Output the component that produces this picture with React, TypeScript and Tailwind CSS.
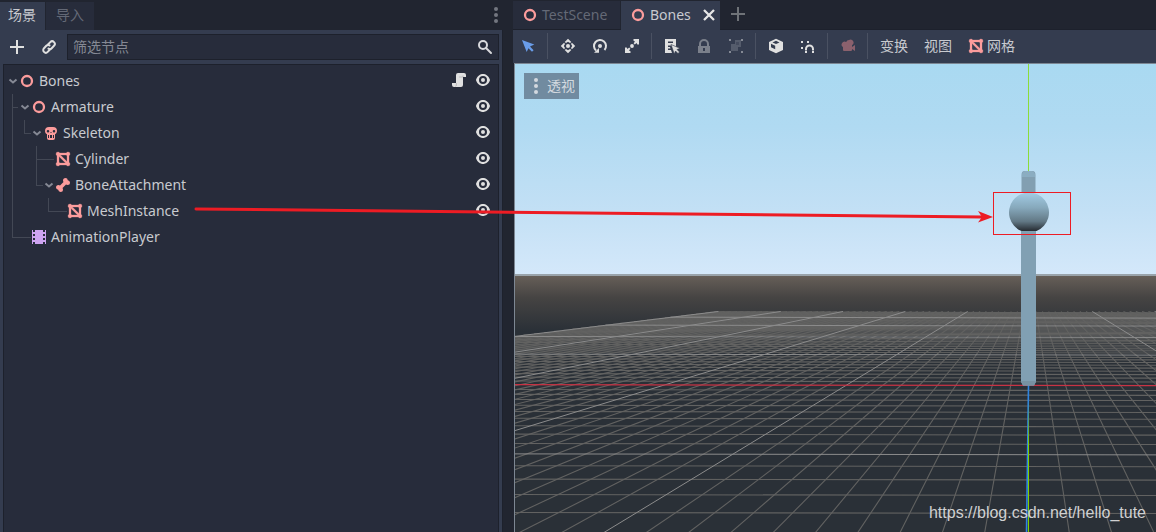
import React from "react";

const MESH =
  "M3 1a2 2 0 0 0-2 2 2 2 0 0 0 1 1.73v6.541A2 2 0 0 0 1 13a2 2 0 0 0 2 2 2 2 0 0 0 1.73-1h6.542A2 2 0 0 0 13 15a2 2 0 0 0 2-2 2 2 0 0 0-1-1.73V4.727A2 2 0 0 0 15 3a2 2 0 0 0-2-2 2 2 0 0 0-1.73 1H4.728A2 2 0 0 0 3 1zm2.414 3h5.857c.175.303.427.555.729.73v5.856zM4 5.414 10.586 12H4.729a2 2 0 0 0-.729-.73z";

type IconName =
  | "spatial" | "skeleton" | "mesh" | "bone" | "anim" | "eye" | "script" | "plus" | "link"
  | "search" | "dots" | "close" | "select" | "move" | "rotate" | "scale" | "list" | "lock"
  | "group" | "cube" | "snap" | "camera";

const shapes: Record<IconName, React.ReactNode> = {
  spatial: <circle cx="8" cy="8" r="5" fill="none" stroke="#fc9c9c" strokeWidth="2.300" />,
  skeleton: (
    <path
      fill="#fc9c9c"
      fillRule="evenodd"
      d="M6 2h4a4 4 0 0 1 4 4c0 1.600-.8 2.700-2 3.300V13a2 2 0 0 1-2 2H6a2 2 0 0 1-2-2V9.300C2.800 8.700 2 7.600 2 6a4 4 0 0 1 4-4zM5 5a1.300 1.300 0 1 0 0 2.600A1.300 1.300 0 0 0 5 5zm6 0a1.300 1.300 0 1 0 0 2.600A1.300 1.300 0 0 0 11 5zM7.500 7v1h1V7zM5 10v3h1v-2h1v2h2v-2h1v2h1v-3h-1v1H9v-1H7v1H6v-1z"
    />
  ),
  mesh: <path fill="#fc9c9c" stroke="#fc9c9c" strokeWidth="0.300" d={MESH} />,
  bone: (
    <path
      fill="#fc9c9c"
      d="M10.500 1A2.500 2.500 0 0 0 8 3.500c0 .6.200 1.100.5 1.500L5 8.500c-.4-.3-.9-.5-1.500-.5A2.500 2.500 0 0 0 1 10.500 2.500 2.500 0 0 0 3.200 12.800 2.500 2.500 0 0 0 5.500 15 2.500 2.500 0 0 0 8 12.500c0-.6-.2-1.100-.5-1.500L11 7.500c.4.300.9.500 1.500.5A2.500 2.500 0 0 0 15 5.500a2.500 2.500 0 0 0-2.200-2.300A2.500 2.500 0 0 0 10.500 1z"
    />
  ),
  anim: (
    <path
      fill="#cea4f1"
      fillRule="evenodd"
      d="M1 1v14h1v-2h2v2h8v-2h2v2h1V1h-1v2h-2V1H4v2H2V1zm1 4h2v2H2zm10 0h2v2h-2zM2 9h2v2H2zm10 0h2v2h-2z"
    />
  ),
  eye: (
    <path
      fill="#e0e0e0"
      fillRule="evenodd"
      d="M8 2C5.443 2 2.209 3.948 1.045 7.705a1 1 0 0 0-.006.570C2.163 12.022 5.393 14 8 14s5.838-1.978 6.963-5.725a1 1 0 0 0 0-.550C13.861 3.935 10.557 2 8 2zm0 2a4 4 0 0 1 0 8 4 4 0 0 1 0-8zm0 2a2 2 0 0 0 0 4 2 2 0 0 0 0-4z"
    />
  ),
  script: (
    <>
      <path fill="#e0e0e0" d="M7 1a2 2 0 0 0-2 2v8H1v2a2 2 0 0 0 2 2h7a2 2 0 0 0 2-2V5h3V3a2 2 0 0 0-2-2z" />
      <path fill="none" stroke="#b4b4b6" strokeWidth="0.800" d="M5.400 11v2a1.500 1.500 0 0 1-1 1.500M8 5h4V3.500" />
    </>
  ),
  plus: <path fill="currentColor" d="M7 1v6H1v2h6v6h2V9h6V7H9V1z" />,
  link: (
    <g fill="none" stroke="#e0e0e0" strokeWidth="2" strokeLinecap="round">
      <path d="M7 5.500 9.300 3.100a2.600 2.600 0 0 1 3.700 3.700L10.700 9.200a2.600 2.600 0 0 1-3.200.400" />
      <path d="M9 10.500 6.700 12.900a2.600 2.600 0 0 1-3.700-3.700L5.300 6.800a2.600 2.600 0 0 1 3.200-.4" />
    </g>
  ),
  search: (
    <g fill="none" stroke="#d8d9dc" strokeWidth="2">
      <circle cx="6" cy="6" r="4" />
      <path d="m9 9 5 5" strokeLinecap="round" />
    </g>
  ),
  dots: (
    <g fill="currentColor">
      <circle cx="8" cy="2" r="2" />
      <circle cx="8" cy="8" r="2" />
      <circle cx="8" cy="14" r="2" />
    </g>
  ),
  close: <path fill="none" stroke="#e6e6e6" strokeWidth="2.300" d="m3 3 10 10M13 3 3 13" />,
  select: <path fill="#699ce8" d="m2 2 12.300 4.600-4.300 2 3.600 3.600-1.600 1.600-3.600-3.600L6.700 14z" />,
  move: (
    <g fill="#e0e0e0">
      <circle cx="8" cy="8" r="2" />
      <path d="M8 .800 4.700 4.100 6 5l2-1.200L10 5l1.300-.9zM8 15.200l-3.300-3.300L6 11l2 1.200 2-1.200 1.300.9zM.800 8l3.300-3.300L5 6 3.800 8 5 10l-.9 1.300zM15.200 8l-3.300-3.300L11 6l1.200 2-1.200 2 .9 1.300z" />
    </g>
  ),
  rotate: (
    <>
      <path fill="none" stroke="#e0e0e0" strokeWidth="2" d="M4 12.500A6 6 0 1 1 12.500 12" />
      <circle cx="8" cy="8" r="2" fill="#e0e0e0" />
      <path fill="#e0e0e0" d="M2 14.800h5V10z" />
    </>
  ),
  scale: (
    <>
      <circle cx="8" cy="8" r="1.900" fill="#e0e0e0" />
      <path fill="#e0e0e0" d="M9.500 1H15v5.500h-1.700L12.600 5 10.800 6.400 9.600 5.200 11 3.400 9.500 2.700zM6.500 15H1V9.500h1.700l.7 1.500 1.800-1.400 1.200 1.200L5 12.600l1.500.7z" />
    </>
  ),
  list: (
    <>
      <path fill="#e0e0e0" fillRule="evenodd" d="M1 1v14h7l-1-3H4v-1.500h2.500L6 9H4V7.500h3L9 8l3 1V1zm3 2.500h5V5H4z" />
      <path fill="#e0e0e0" stroke="#343c4f" strokeWidth="0.600" d="m7 6.500 9 3.800-3 1.200 2.500 2.500-1.500 1.500-2.500-2.500-1.200 3z" />
    </>
  ),
  lock: (
    <path
      fill="#7b808b"
      fillRule="evenodd"
      d="M8 1a5 5 0 0 0-5 5v2H2v7h12V8h-1V6a5 5 0 0 0-5-5zm0 2a3 3 0 0 1 3 3v2H5V6a3 3 0 0 1 3-3zM7 10h2v3H7z"
    />
  ),
  group: (
    <>
      <path fill="#555c6c" d="M7 2h6v7h-3v4H3V6h4z" />
      <path fill="#454c5e" d="M8 4h3v3H8z" />
      <path fill="#858a95" d="M1 1h2v2H1zM13 1h2v2h-2zM1 13h2v2H1zM13 13h2v2h-2z" />
    </>
  ),
  cube: (
    <>
      <path fill="#e0e0e0" d="M8 .800 15 4v8l-7 3.300L1 12V4z" />
      <path fill="#343c4f" d="M8 2.800 11.500 4.400 8 6 4.500 4.400zM3 5.800l4.200 2v3.400L3 9.200z" />
    </>
  ),
  snap: (
    <>
      <path fill="#e0e0e0" d="M1 3h2v2H1zM7 3h2v2H7zM1 9h2v2H1z" />
      <path fill="none" stroke="#e0e0e0" strokeWidth="2" d="M6 15v-4a3.500 3.500 0 0 1 7 0v4" />
      <path stroke="#343c4f" strokeWidth="0.600" d="M4.500 12.500h3M11.500 12.500h3" />
    </>
  ),
  camera: (
    <path
      fill="#8b616d"
      d="M9 2a3 3 0 0 0-2.800 2A2.700 2.700 0 1 0 3 9v3a1 1 0 0 0 1 1h7a1 1 0 0 0 1-1v-1l3 2V7l-3 2V7.200A3 3 0 0 0 9 2z"
    />
  ),
};

function Icon({ name, className = "" }: { name: IconName; className?: string }) {
  return (
    <svg viewBox="0 0 16 16" aria-hidden="true" className={`size-4 shrink-0 ${className}`}>
      {shapes[name]}
    </svg>
  );
}

function IconButton({ name, label, className = "" }: { name: IconName; label: string; className?: string }) {
  return (
    <button aria-label={label} className={`flex h-6 w-6 shrink-0 items-center justify-center ${className}`}>
      <Icon name={name} />
    </button>
  );
}

type Node = { name: string; icon: IconName; indent: string; open?: boolean; script?: boolean; visible?: boolean };

const nodes: Node[] = [
  { name: "Bones", icon: "spatial", indent: "pl-1", open: true, script: true, visible: true },
  { name: "Armature", icon: "spatial", indent: "pl-4", open: true, visible: true },
  { name: "Skeleton", icon: "skeleton", indent: "pl-7", open: true, visible: true },
  { name: "Cylinder", icon: "mesh", indent: "pl-10", visible: true },
  { name: "BoneAttachment", icon: "bone", indent: "pl-10", open: true, visible: true },
  { name: "MeshInstance", icon: "mesh", indent: "pl-13", visible: true },
  { name: "AnimationPlayer", icon: "anim", indent: "pl-4" },
];

function SceneTree() {
  return (
    <div className="relative flex-1 border border-b-0 border-[#1d212c] bg-[#272c3b] pt-[3px]">
      <svg
        className="absolute top-0 left-0 h-48 w-20"
        viewBox="0 0 80 192"
        fill="none"
        stroke="#434855"
        shapeRendering="crispEdges"
        aria-hidden="true"
      >
        <path d="M8.500 29v143.500H27M8.500 42.500H14M20.500 55v13.500H27M32.500 81v39.500H39M32.500 94.500H50M44.500 133v13.500H63" />
      </svg>
      <ul>
        {nodes.map((n) => (
          <li key={n.name} className={`relative flex h-[26px] items-center pr-[7px] ${n.indent}`}>
            <span className="w-[11px] shrink-0">
              {n.open && (
                <svg viewBox="0 0 10 10" className="size-[10px]" fill="none" stroke="#858994" strokeWidth="2" aria-hidden="true">
                  <path d="m1.500 3.500 3.500 3 3.500-3" />
                </svg>
              )}
            </span>
            <Icon name={n.icon} className="mr-1" />
            <span className="flex-1">{n.name}</span>
            {n.script && (
              <button aria-label="Open script" className="mr-2 pb-0.5">
                <Icon name="script" />
              </button>
            )}
            {n.visible && (
              <button aria-label={`Toggle ${n.name}`} className="pb-0.5">
                <Icon name="eye" />
              </button>
            )}
          </li>
        ))}
      </ul>
    </div>
  );
}

const HORIZON = 208.5;
const VANISH_X = 515.5;
const VANISH_Y = 209.3;
const rowY = (n: number) => HORIZON + 2978 / (26.4 + n);
const colX = (m: number, y: number) => VANISH_X + (y - VANISH_Y) * (0.1632 * m - 0.0136);
const range = (from: number, to: number) => Array.from({ length: to - from + 1 }, (_, i) => from + i);

function Viewport3D() {
  const far = rowY(50);
  const rows = range(-16, 50).filter((n) => n !== 0);
  const cols = range(-50, 50).filter((m) => m !== 0);
  const row = (n: number) => {
    const y = rowY(n);
    return <path key={`r${n}`} d={`M${Math.max(0, colX(-50, y))} ${y - 0.2}L${Math.min(641, colX(50, y))} ${y + 0.8}`} />;
  };
  const col = (m: number) => <path key={`c${m}`} d={`M${colX(m, far)} ${far}L${colX(m, 480)} 480`} />;
  return (
    <svg viewBox="0 0 641 468" preserveAspectRatio="xMidYMin slice" className="absolute inset-0 size-full" aria-hidden="true">
      <defs>
        <linearGradient id="sky" x1="0" y1="0" x2="0" y2="1">
          <stop offset="0" stopColor="#a9d9f1" />
          <stop offset="0.3" stopColor="#b0daf2" />
          <stop offset="0.7" stopColor="#c3e0f5" />
          <stop offset="1" stopColor="#d4e8fa" />
        </linearGradient>
        <linearGradient id="ground" x1="0" y1="0" x2="0" y2="1">
          <stop offset="0" stopColor="#686059" />
          <stop offset="0.4" stopColor="#464443" />
          <stop offset="1" stopColor="#2a3037" />
        </linearGradient>
        <linearGradient id="ball" x1="0" y1="0" x2="0" y2="1">
          <stop offset="0" stopColor="#a3cce5" />
          <stop offset="0.4" stopColor="#86a8bb" />
          <stop offset="0.75" stopColor="#627885" />
          <stop offset="1" stopColor="#262b31" />
        </linearGradient>
        <linearGradient id="yaxis" x1="0" y1="0" x2="0" y2="1">
          <stop offset="0.1" stopColor="#7fd100" stopOpacity="0" />
          <stop offset="0.4" stopColor="#7fd100" />
        </linearGradient>
      </defs>
      <rect width="641" height="211" fill="url(#sky)" />
      <rect y="211" width="641" height="257" fill="#2a3037" />
      <rect y="211" width="641" height="56" fill="url(#ground)" />
      <rect y="210" width="641" height="2" fill="#99a3aa" />
      <g stroke="#626261" strokeWidth="1.100" fill="none">
        {rows.filter((n) => n % 10 !== 0).map(row)}
        {cols.filter((m) => m % 10 !== 0).map(col)}
      </g>
      <g stroke="#8c8c8c" strokeWidth="1" fill="none">
        {rows.filter((n) => n % 10 === 0 && n !== 50).map(row)}
        {cols.filter((m) => m % 10 === 0 && m !== 50).map(col)}
      </g>
      <path d="M0 320.700 641 321.600" stroke="#c83344" strokeWidth="1.300" />
      <path d="M513.500 0V107" stroke="#8cdc38" strokeWidth="1" />
      <path d="M513.500 321 511.500 470" stroke="#2f84e0" strokeWidth="1.600" />
      <rect x="513" y="322" width="1" height="146" fill="url(#yaxis)" />
      <path d="M506.500 128V111q0-4 3-4h8q3 0 3 4v17z" fill="#829fb1" />
      <path d="M507 113v-3q1-3 3-3h7q2 0 3 3v3z" fill="#8badc1" />
      <path d="M506 167h15v151l-2 3.500h-11l-2-3.500z" fill="#81a0b3" />
      <path d="M506 317h15l-2 4.500h-11z" fill="#7792a3" />
      <path d="M506.500 167A20 20 0 1 1 521.500 167z" fill="url(#ball)" />
    </svg>
  );
}

function Separator() {
  return <span className="-ml-px h-[26px] w-px shrink-0 bg-[#4a5162]" />;
}

export default function App() {
  return (
    <div className="relative flex min-h-screen overflow-hidden bg-[#212530] font-['Noto_Sans','Noto_Sans_CJK_SC',sans-serif] text-[14px] leading-5 text-[#c8cacf]">
      <aside className="flex w-[503px] shrink-0 flex-col">
        <div className="flex h-[30px] items-end">
          <button className="h-[28px] bg-[#343c4f] pr-[9px] pb-0.5 pl-2">场景</button>
          <button className="ml-px h-[28px] bg-[#272c3b] px-[10px] pb-0.5 text-[#646976]">导入</button>
          <button aria-label="Dock menu" className="mr-[-1px] ml-auto flex h-[30px] w-4 items-center justify-center text-[#737780]">
            <Icon name="dots" />
          </button>
        </div>
        <div className="flex flex-1 flex-col border-r border-[#1d212c] bg-[#343c4f] px-[3px] pt-1">
          <div className="mb-1 flex items-center pl-0.5">
            <IconButton name="plus" label="Add node" className="mr-2 text-[#e0e0e0]" />
            <IconButton name="link" label="Instance scene" className="mr-[6px]" />
            <label className="flex h-[26px] flex-1 items-center border border-[#1d212c] bg-[#272c3b] pr-[5px] pl-[5px]">
              <input aria-label="筛选节点" placeholder="筛选节点" className="min-w-0 flex-1 bg-transparent outline-none placeholder:text-[#858994]" />
              <Icon name="search" />
            </label>
          </div>
          <SceneTree />
        </div>
      </aside>
      <main className="ml-[10px] flex min-w-0 flex-1 flex-col">
        <div className="flex h-[30px] items-end border-b border-[#1d212c]">
          <button className="flex h-[28px] w-[107px] items-center bg-[#272c3b] pl-[9px] text-[#646976]">
            <Icon name="spatial" className="mr-1" />
            TestScene
          </button>
          <div className="-mb-px ml-px flex h-[29px] w-[99px] items-center bg-[#343c4f] pb-px pl-[9px]">
            <button className="flex items-center">
              <Icon name="spatial" className="mr-1" />
              Bones
            </button>
            <button aria-label="Close tab" className="ml-auto pr-[3px]">
              <Icon name="close" />
            </button>
          </div>
          <button aria-label="New tab" className="mb-[7px] ml-[10px] text-[#6f7378]">
            <Icon name="plus" />
          </button>
        </div>
        <div className="flex h-[33px] shrink-0 items-center gap-2 bg-[#343c4f] pb-px pl-[3px]">
          <IconButton name="select" label="Select" />
          <Separator />
          <IconButton name="move" label="Move" />
          <IconButton name="rotate" label="Rotate" />
          <IconButton name="scale" label="Scale" />
          <Separator />
          <IconButton name="list" label="List select" />
          <IconButton name="lock" label="Lock" />
          <IconButton name="group" label="Group" />
          <Separator />
          <IconButton name="cube" label="Local space" />
          <IconButton name="snap" label="Snap" />
          <Separator />
          <IconButton name="camera" label="Camera override" />
          <Separator />
          <button className="px-1">变换</button>
          <button className="px-1">视图</button>
          <button className="flex items-center gap-[3px] pl-1">
            <Icon name="mesh" />
            网格
          </button>
        </div>
        <div className="relative ml-px flex-1 border-t border-l border-[#7d8793]">
          <Viewport3D />
          <button className="absolute top-[9px] left-[9px] flex h-[26px] items-center gap-[3px] bg-[#718ba0] px-1 text-[#d3d9df]">
            <Icon name="dots" />
            透视
          </button>
          <a
            href="https://blog.csdn.net/hello_tute"
            className="absolute right-[10px] bottom-[7px] font-['Liberation_Sans',sans-serif] text-[16px] leading-6 text-[#d0d1d2]"
          >
            https://blog.csdn.net/hello_tute
          </a>
        </div>
      </main>
      <svg className="pointer-events-none absolute top-0 left-0 h-[532px] w-[1156px]" viewBox="0 0 1156 532" fill="none" aria-hidden="true">
        <path d="M196 209 982 217" stroke="#ed1c24" strokeWidth="3" strokeLinecap="round" />
        <path d="m993 217-15-6 4 6-4 5.500z" fill="#ed1c24" />
        <rect x="993.500" y="192.500" width="77" height="42" stroke="#ed1c24" />
      </svg>
    </div>
  );
}
